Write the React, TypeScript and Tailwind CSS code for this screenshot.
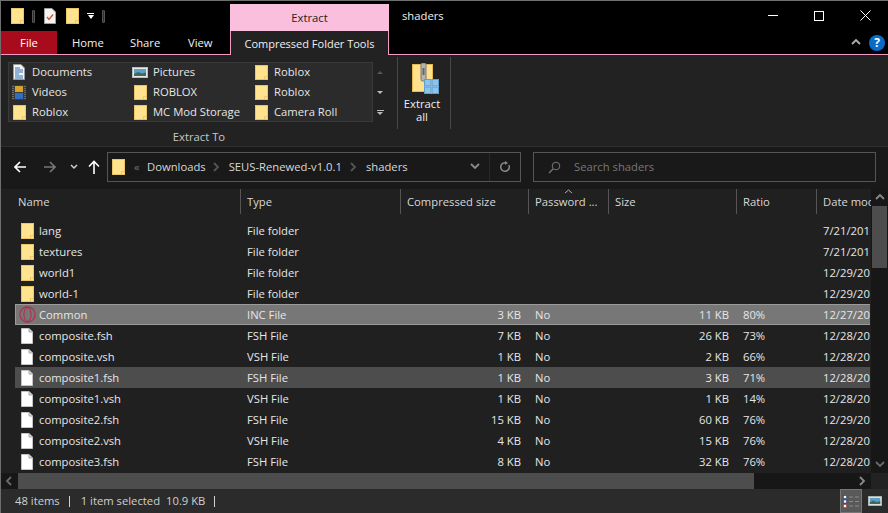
import React from 'react';

const FONT = "font-['Open_Sans','Noto_Sans',sans-serif]";

const FolderIcon: React.FC<{ h?: number }> = ({ h = 16 }) => (
  <svg width="13" height={h} viewBox="0 0 13 16" preserveAspectRatio="none" className="shrink-0">
    <rect x="0.5" y="0.5" width="12" height="15" fill="#ffe38f" stroke="#ecc566" />
    <path d="M9.5 15.5V12.5H12.5" fill="none" stroke="#ecc566" />
  </svg>
);

const FileIcon = () => (
  <svg width="12" height="16" viewBox="0 0 12 16" className="shrink-0">
    <path d="M0.5 0.5H8L11.5 4V15.5H0.5Z" fill="#fff" stroke="#c4c4c4" />
    <path d="M8 0.5V4H11.5" fill="#dcdcdc" stroke="#a8a8a8" />
  </svg>
);

const RingIcon = () => (
  <svg width="17" height="17" viewBox="0 0 17 17" className="shrink-0">
    <circle cx="8.5" cy="8.5" r="7.6" fill="none" stroke="#b5294a" strokeWidth="1.1" />
    <ellipse cx="8.5" cy="8.5" rx="3.6" ry="6.8" fill="none" stroke="#b5294a" strokeWidth="1" />
  </svg>
);

const DocIcon = () => (
  <svg width="12" height="16" viewBox="0 0 12 16" className="shrink-0">
    <path d="M0.5 0.5H8L11.5 4V15.5H0.5Z" fill="#f4f4f4" stroke="#9a9a9a" />
    <path d="M2 4H7M2 6H10M2 8H10M2 10H6M2 12H10M2 14H10" stroke="#2f6fb5" strokeWidth="1" />
  </svg>
);

const PictureIcon: React.FC<{ w?: number; h?: number }> = ({ w = 16, h = 11 }) => (
  <svg width={w} height={h} viewBox="0 0 16 11" className="shrink-0">
    <rect x="0.5" y="0.5" width="15" height="10" fill="#e8e8e8" stroke="#bdbdbd" />
    <rect x="2" y="2" width="12" height="7" fill="#5c9fc9" />
    <path d="M2 7L6 5L10 6.5L14 5.5V9H2Z" fill="#3f6b52" />
  </svg>
);

const VideoIcon = () => (
  <svg width="14" height="15" viewBox="0 0 14 15" className="shrink-0">
    <rect width="14" height="15" fill="#3a3a3a" />
    <rect x="3" y="1" width="8" height="6" fill="#d8a32c" />
    <rect x="3" y="8" width="8" height="6" fill="#2e6fc2" />
    <path d="M1 1V14M13 1V14" stroke="#999" strokeDasharray="1 1" />
  </svg>
);

const ChecklistIcon = () => (
  <svg width="12" height="16" viewBox="0 0 12 16">
    <path d="M0.5 0.5H8L11.5 4V15.5H0.5Z" fill="#f4f4f4" stroke="#a0a0a0" />
    <path d="M3 9L5 11.5L9 6.5" fill="none" stroke="#d9532c" strokeWidth="1.4" />
  </svg>
);

const Grip = () => <div className="w-[3px] h-[13px] bg-[#2e2e2e] border border-[#555] rounded-[1px]" />;

const ExtractAllIcon = () => (
  <svg width="28" height="31" viewBox="0 0 28 31" className="ml-[14px]">
    <rect x="0.5" y="1.5" width="20" height="27" fill="#ffe08c" stroke="#e8b94e" />
    <rect x="9" y="0" width="5" height="18" rx="1.5" fill="#b3b3b3" stroke="#777" />
    <rect x="10.5" y="5" width="2" height="7" fill="#666" />
    <rect x="12" y="16" width="15" height="15" fill="#f2f8fd" />
    <rect x="12.5" y="16.5" width="6.5" height="6.5" fill="#8fc4ea" stroke="#5d9ecf" />
    <rect x="20" y="16.5" width="6.5" height="6.5" fill="#8fc4ea" stroke="#5d9ecf" />
    <rect x="12.5" y="24" width="6.5" height="6.5" fill="#8fc4ea" stroke="#5d9ecf" />
    <rect x="20" y="24" width="6.5" height="6.5" fill="#8fc4ea" stroke="#5d9ecf" />
  </svg>
);

const DetailsIcon = () => (
  <svg width="16" height="13" viewBox="0 0 16 13">
    <rect x="0.5" y="0.5" width="3" height="3" fill="#fff" stroke="#1d3f7a" strokeWidth="0.6" />
    <rect x="0.5" y="5" width="3" height="3" fill="#fff" stroke="#1d3f7a" strokeWidth="0.6" />
    <rect x="0.5" y="9.5" width="3" height="3" fill="#fff" stroke="#b03030" strokeWidth="0.6" />
    <path d="M6 2H10M12 2H16M6 6.5H10M12 6.5H16M6 11H10M12 11H16" stroke="#8a8a8a" />
  </svg>
);

type GalleryItem = { label: string; icon: 'folder' | 'doc' | 'pic' | 'video' };

const GALLERY: GalleryItem[][] = [
  [
    { label: 'Documents', icon: 'doc' },
    { label: 'Videos', icon: 'video' },
    { label: 'Roblox', icon: 'folder' },
  ],
  [
    { label: 'Pictures', icon: 'pic' },
    { label: 'ROBLOX', icon: 'folder' },
    { label: 'MC Mod Storage', icon: 'folder' },
  ],
  [
    { label: 'Roblox', icon: 'folder' },
    { label: 'Roblox', icon: 'folder' },
    { label: 'Camera Roll', icon: 'folder' },
  ],
];

type Row = {
  name: string;
  type: string;
  comp?: string;
  pass?: string;
  size?: string;
  ratio?: string;
  date: string;
  icon: 'folder' | 'file' | 'ring';
  state?: 'selected' | 'hover';
};

const ROWS: Row[] = [
  { name: 'lang', type: 'File folder', date: '7/21/2019', icon: 'folder' },
  { name: 'textures', type: 'File folder', date: '7/21/2019', icon: 'folder' },
  { name: 'world1', type: 'File folder', date: '12/29/2018', icon: 'folder' },
  { name: 'world-1', type: 'File folder', date: '12/29/2018', icon: 'folder' },
  { name: 'Common', type: 'INC File', comp: '3 KB', pass: 'No', size: '11 KB', ratio: '80%', date: '12/27/2018', icon: 'ring', state: 'selected' },
  { name: 'composite.fsh', type: 'FSH File', comp: '7 KB', pass: 'No', size: '26 KB', ratio: '73%', date: '12/28/2018', icon: 'file' },
  { name: 'composite.vsh', type: 'VSH File', comp: '1 KB', pass: 'No', size: '2 KB', ratio: '66%', date: '12/28/2018', icon: 'file' },
  { name: 'composite1.fsh', type: 'FSH File', comp: '1 KB', pass: 'No', size: '3 KB', ratio: '71%', date: '12/28/2018', icon: 'file', state: 'hover' },
  { name: 'composite1.vsh', type: 'VSH File', comp: '1 KB', pass: 'No', size: '1 KB', ratio: '14%', date: '12/28/2018', icon: 'file' },
  { name: 'composite2.fsh', type: 'FSH File', comp: '15 KB', pass: 'No', size: '60 KB', ratio: '76%', date: '12/29/2018', icon: 'file' },
  { name: 'composite2.vsh', type: 'VSH File', comp: '4 KB', pass: 'No', size: '15 KB', ratio: '76%', date: '12/28/2018', icon: 'file' },
  { name: 'composite3.fsh', type: 'FSH File', comp: '8 KB', pass: 'No', size: '32 KB', ratio: '76%', date: '12/28/2018', icon: 'file' },
];

const HEADERS = [
  { label: 'Name', w: 'w-[226px] pl-[3px]' },
  { label: 'Type', w: 'w-[160px] pl-[6px]' },
  { label: 'Compressed size', w: 'w-[128px] pl-[6px]' },
  { label: 'Password ...', w: 'w-[80px] pl-[6px]' },
  { label: 'Size', w: 'w-[128px] pl-[6px]' },
  { label: 'Ratio', w: 'w-[80px] pl-[6px]' },
  { label: 'Date modified', w: 'w-[54px] pl-[6px]' },
];

const Chevron: React.FC<{ dir: 'up' | 'down' | 'left' | 'right'; color?: string }> = ({ dir, color = '#7a7a7a' }) => {
  const d = { up: 'M1 6L5 2L9 6', down: 'M1 2L5 6L9 2', left: 'M6 1L2 5L6 9', right: 'M2 1L6 5L2 9' }[dir];
  return (
    <svg width="10" height="10" viewBox="0 0 10 10" className="shrink-0">
      <path d={d} fill="none" stroke={color} strokeWidth="1.8" />
    </svg>
  );
};

const FileRow: React.FC<{ row: Row }> = ({ row }) => {
  const bg =
    row.state === 'selected'
      ? 'bg-[#777777] shadow-[inset_1px_0_0_#9a9a9a,inset_0_1px_0_#9a9a9a,inset_0_-1px_0_#9a9a9a]'
      : row.state === 'hover'
        ? 'bg-[#4d4d4d]'
        : '';
  return (
    <div className={`flex items-center h-[21px] ml-[14px] w-[855px] overflow-hidden whitespace-nowrap text-[#e6e6e6] ${bg}`}>
      <div className="w-[226px] shrink-0 flex items-center pl-[6px] gap-[6px]">
        <div className="w-[12px] shrink-0 flex justify-center">
          {row.icon === 'folder' && <FolderIcon />}
          {row.icon === 'file' && <FileIcon />}
          {row.icon === 'ring' && <RingIcon />}
        </div>
        <span>{row.name}</span>
      </div>
      <div className="w-[160px] shrink-0 pl-[6px]">{row.type}</div>
      <div className="w-[128px] shrink-0 pr-[8px] text-right">{row.comp}</div>
      <div className="w-[80px] shrink-0 pl-[6px]">{row.pass}</div>
      <div className="w-[128px] shrink-0 pr-[8px] text-right">{row.size}</div>
      <div className="w-[80px] shrink-0 pl-[6px]">{row.ratio}</div>
      <div className="shrink-0 pl-[6px]">{row.date}</div>
    </div>
  );
};

export default function App() {
  return (
    <div className={`${FONT} w-[888px] h-[513px] overflow-hidden flex flex-col bg-black text-[11.25px] leading-[16px] text-[#e6e6e6] border-t border-l border-[#6e6e6e]`}>
      {/* Title bar */}
      <div className="h-[30px] shrink-0 flex items-end">
        <div className="w-[229px] h-[30px] shrink-0 flex items-center pl-[10px]">
          <FolderIcon />
          <div className="ml-[8px]"><Grip /></div>
          <div className="ml-[9px]"><ChecklistIcon /></div>
          <div className="ml-[10px]"><FolderIcon /></div>
          <div className="ml-[8px] flex flex-col items-center gap-[1px] w-[7px]">
            <div className="w-[7px] h-[1px] bg-white" />
            <div className="w-0 h-0 border-x-[3px] border-t-[4px] border-x-transparent border-t-white" />
          </div>
          <div className="ml-[8px]"><Grip /></div>
        </div>
        <div className="w-[159px] h-[27px] shrink-0 bg-[#fabfdc] text-[#222] flex items-center justify-center">Extract</div>
        <div className="ml-[13px] h-[30px] flex items-center text-[#f0f0f0]">shaders</div>
        <div className="ml-auto h-[30px] flex items-center pb-[1px]">
          <div className="w-[46px] flex justify-center"><div className="w-[10px] h-[1px] bg-white" /></div>
          <div className="w-[46px] flex justify-center"><div className="w-[10px] h-[10px] border border-white" /></div>
          <div className="w-[46px] flex justify-center">
            <svg width="11" height="11" viewBox="0 0 11 11"><path d="M0.5 0.5L10.5 10.5M10.5 0.5L0.5 10.5" stroke="#fff" /></svg>
          </div>
        </div>
      </div>

      {/* Ribbon tabs */}
      <div className="h-[24px] shrink-0 flex items-stretch border-b border-[#f29ac4]">
        <div className="w-[56px] bg-[#a80c1c] text-white flex items-center justify-center pt-[1px]">File</div>
        <div className="w-[173px] flex items-center text-[#f0f0f0] pl-[15px] pt-[1px]">
          <span className="w-[58px]">Home</span>
          <span className="w-[58px]">Share</span>
          <span>View</span>
        </div>
        <div className="w-[159px] h-[24px] bg-[#222222] border-x border-[#f29ac4] flex items-center justify-center whitespace-nowrap text-[#f0f0f0] text-[11px] pt-[1px]">
          Compressed Folder Tools
        </div>
        <div className="ml-auto flex items-center gap-[8px] pr-[3px]">
          <Chevron dir="up" color="#b0b0b0" />
          <div className="w-[16px] h-[16px] rounded-full bg-[#0a6cc9] text-white flex items-center justify-center text-[12px] font-bold">?</div>
        </div>
      </div>

      {/* Ribbon body */}
      <div className="h-[92px] shrink-0 bg-[#222222] border-b border-[#2e2e2e] flex pt-[2px]">
        <div className="w-[396px] shrink-0 flex flex-col">
          <div className="flex ml-[7px] mt-[5px]">
            <div className="w-[365px] h-[60px] bg-[#2b2b2b] border border-[#3a3a3a] flex">
              {GALLERY.map((col, i) => (
                <div key={i} className="w-[121px] flex flex-col -mt-[1px]">
                  {col.map((it, j) => (
                    <div key={j} className="h-[20px] shrink-0 flex items-center pl-[4px] whitespace-nowrap">
                      <div className="w-[15px] flex justify-start shrink-0">
                        {it.icon === 'folder' && <FolderIcon h={15} />}
                        {it.icon === 'doc' && <DocIcon />}
                        {it.icon === 'pic' && <div className="-ml-[2px]"><PictureIcon /></div>}
                        {it.icon === 'video' && <div className="-ml-[1px]"><VideoIcon /></div>}
                      </div>
                      <span className="ml-[4px]">{it.label}</span>
                    </div>
                  ))}
                </div>
              ))}
            </div>
            <div className="w-[14px] h-[60px] flex flex-col items-center">
              <div className="h-[20px] flex items-center">
                <div className="w-0 h-0 border-x-[3px] border-b-[3px] border-x-transparent border-b-[#555]" />
              </div>
              <div className="h-[20px] flex items-center">
                <div className="w-0 h-0 border-x-[3px] border-t-[3px] border-x-transparent border-t-[#bbb]" />
              </div>
              <div className="h-[20px] flex flex-col items-center justify-center gap-[1px]">
                <div className="w-[7px] h-[1px] bg-[#bbb]" />
                <div className="w-0 h-0 border-x-[3px] border-t-[3px] border-x-transparent border-t-[#bbb]" />
              </div>
            </div>
          </div>
          <div className="text-center text-[#c8c8c8] mt-[7px]">Extract To</div>
        </div>
        <div className="w-[1px] h-[72px] bg-[#484848] shrink-0" />
        <div className="w-[52px] shrink-0 flex flex-col items-start pt-[6px]">
          <ExtractAllIcon />
          <div className="w-[48px] text-center leading-[13px] mt-[3px] text-[#f0f0f0]">Extract<br />all</div>
        </div>
        <div className="w-[1px] h-[72px] bg-[#484848] shrink-0" />
      </div>

      {/* Address bar */}
      <div className="h-[42px] shrink-0 bg-[#191919] flex items-start pt-[5px]">
        <div className="w-[106px] h-[30px] shrink-0 flex items-center">
          <svg width="12" height="12" viewBox="0 0 12 12" className="ml-[13px]">
            <path d="M6 1L1 6L6 11M1 6H12" fill="none" stroke="#fff" strokeWidth="1.6" />
          </svg>
          <svg width="12" height="12" viewBox="0 0 12 12" className="ml-[18px]">
            <path d="M6 1L11 6L6 11M0 6H11" fill="none" stroke="#777" strokeWidth="1.6" />
          </svg>
          <svg width="8" height="6" viewBox="0 0 8 6" className="ml-[14px]">
            <path d="M1 1L4 4L7 1" fill="none" stroke="#d0d0d0" strokeWidth="1.5" />
          </svg>
          <svg width="12" height="14" viewBox="0 0 12 14" className="ml-[10px]">
            <path d="M1 6.5L6 1.5L11 6.5M6 1.5V14" fill="none" stroke="#fff" strokeWidth="1.6" />
          </svg>
        </div>
        <div className="w-[414px] h-[30px] shrink-0 border border-[#555] flex items-center pl-[4px] whitespace-nowrap">
          <FolderIcon />
          <span className="ml-[9px] w-[12px] text-[#777] text-[11px]">«</span>
          <span className="ml-[1px] text-[#d8d8d8]">Downloads</span>
          <div className="ml-[6px]"><Chevron dir="right" color="#555" /></div>
          <span className="ml-[7px] text-[#d8d8d8]">SEUS-Renewed-v1.0.1</span>
          <div className="ml-[7px]"><Chevron dir="right" color="#555" /></div>
          <span className="ml-[7px] text-[#d8d8d8]">shaders</span>
          <div className="ml-auto h-full flex items-center">
            <Chevron dir="down" color="#8a8a8a" />
            <div className="w-[1px] h-full bg-[#2a2a2a] ml-[9px]" />
            <svg width="12" height="12" viewBox="0 0 12 12" className="mx-[9px]">
              <path d="M9.8 4A4.3 4.3 0 1 1 6 1.7" fill="none" stroke="#8a8a8a" strokeWidth="1.5" />
              <path d="M6 0V4L9 2Z" fill="#8a8a8a" />
            </svg>
          </div>
        </div>
        <div className="w-[343px] h-[30px] shrink-0 ml-[12px] border border-[#555] flex items-center pl-[14px] text-[#777]">
          <svg width="13" height="13" viewBox="0 0 13 13">
            <circle cx="8" cy="5" r="3.8" fill="none" stroke="#777" />
            <path d="M5 8L1 12" stroke="#777" strokeWidth="1.3" />
          </svg>
          <span className="ml-[13px]">Search shaders</span>
        </div>
      </div>

      {/* File list */}
      <div className="h-[284px] shrink-0 bg-[#202020] flex overflow-hidden">
        <div className="w-[870px] shrink-0 flex flex-col relative overflow-hidden">
          <div className="h-[25px] shrink-0 flex pl-[14px] whitespace-nowrap overflow-hidden text-[#d8d8d8]">
            {HEADERS.map((h, i) => (
              <div key={h.label} className={`${h.w} shrink-0 h-full flex items-center ${i < 6 ? 'border-r border-[#555]' : ''}`}>
                <span>{h.label}</span>
              </div>
            ))}
          </div>
          <svg width="9" height="5" viewBox="0 0 9 5" className="absolute left-[563px] top-[0px]">
            <path d="M1 4L4.5 1L8 4" fill="none" stroke="#b0b0b0" />
          </svg>
          <div className="mt-[6px]">
            {ROWS.map(r => <FileRow key={r.name} row={r} />)}
          </div>
        </div>
        <div className="w-[17px] shrink-0 bg-[#171717] flex flex-col items-center">
          <div className="h-[17px] flex items-center"><Chevron dir="up" color="#8a8a8a" /></div>
          <div className="w-[15px] h-[62px] bg-[#4d4d4d]" />
          <div className="mt-auto h-[17px] flex items-center"><Chevron dir="down" color="#6a6a6a" /></div>
        </div>
      </div>

      {/* Horizontal scrollbar */}
      <div className="h-[16px] shrink-0 flex bg-[#171717]">
        <div className="w-[17px] flex items-center justify-center"><Chevron dir="left" color="#6a6a6a" /></div>
        <div className="w-[736px] bg-[#4d4d4d]" />
        <div className="w-[117px] flex items-center justify-end pr-[3px]"><Chevron dir="right" color="#8a8a8a" /></div>
        <div className="flex-1 bg-[#222222]" />
      </div>

      {/* Status bar */}
      <div className="flex-1 bg-[#2b2b2b] flex items-center text-[#d0d0d0] whitespace-nowrap pl-[14px]">
        <span>48 items</span>
        <div className="w-[1px] h-[11px] bg-[#d0d0d0] ml-[9px]" />
        <span className="ml-[11px]">1 item selected</span>
        <span className="ml-[6px]">10.9 KB</span>
        <div className="w-[1px] h-[11px] bg-[#d0d0d0] ml-[9px]" />
        <div className="ml-auto h-full flex items-center">
          <div className="w-[22px] h-full bg-[#595959] border border-[#777] flex items-center justify-center"><DetailsIcon /></div>
          <div className="w-[26px] flex justify-center"><PictureIcon w={14} h={10} /></div>
        </div>
      </div>
    </div>
  );
}
